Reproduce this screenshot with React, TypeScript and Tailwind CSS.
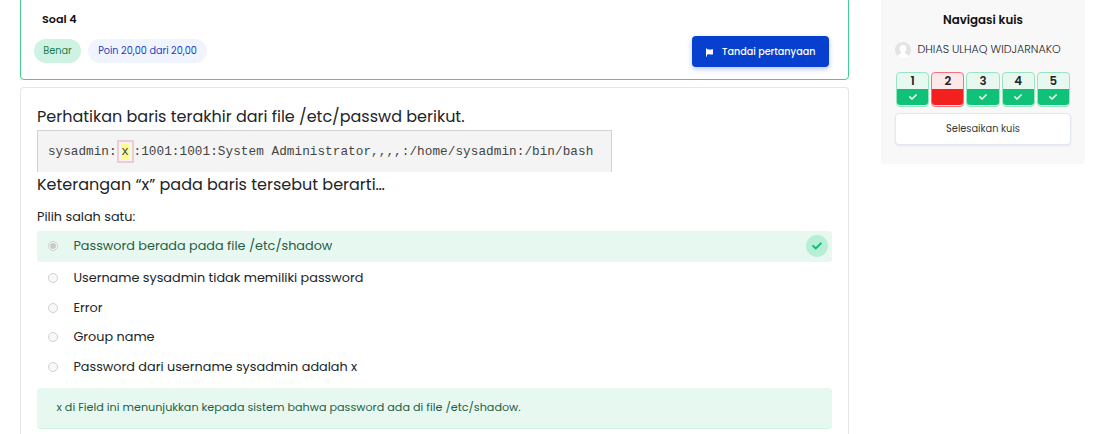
import { FaCheck } from "react-icons/fa";

const options = [
  { text: "Username sysadmin tidak memiliki password", row: "h-[30px]" },
  { text: "Error", row: "h-[29px]" },
  { text: "Group name", row: "h-[30px]" },
  { text: "Password dari username sysadmin adalah x", row: "h-[30px]" },
];

const questions = [
  { n: 1, ok: true },
  { n: 2, ok: false },
  { n: 3, ok: true },
  { n: 4, ok: true },
  { n: 5, ok: true },
];

function Radio({ checked = false }: { checked?: boolean }) {
  return (
    <span className="flex size-[10px] shrink-0 items-center justify-center rounded-full border border-[#d0d0d0] bg-[#f8f8f8]">
      {checked && <span className="size-[6px] rounded-full bg-[#c8cbc9]" />}
    </span>
  );
}

function Flag() {
  return (
    <svg width="8" height="9" viewBox="0 0 8 9" fill="#fff">
      <path d="M0 0.4H1V1.4C2.5 0.8 3.8 1.9 5 1.6L7 1.2V6.3C5.6 7 4.2 6.2 3 6.3L1 6.6V8.4H0Z" />
    </svg>
  );
}

function Avatar() {
  return (
    <svg width="16" height="16" viewBox="0 0 16 16" className="shrink-0">
      <circle cx="8" cy="8" r="8" fill="#e4e4e4" />
      <path d="M8 2.9C5.9 2.9 4.6 4.3 4.6 6.4C4.6 8 5.5 9.6 6.4 10.4V11C5.3 11.8 3.8 12 2.6 13.9A8 8 0 0 0 13.4 13.9C12.2 12 10.7 11.8 9.6 11V10.4C10.5 9.6 11.4 8 11.4 6.4C11.4 4.3 10.1 2.9 8 2.9Z" fill="#fff" />
    </svg>
  );
}

export default function App() {
  return (
    <div className="flex h-[434px] w-[1107px] items-start overflow-hidden bg-white font-['Poppins',Inter,sans-serif] whitespace-nowrap text-[#212529]">
      <main className="-mt-[3px] ml-[20px] w-[829px]">
        <section className="flex h-[83px] justify-between rounded-[4px] border border-[#3fd08f] pr-[19px] pl-[13px]">
          <div>
            <h2 className="mt-[12px] ml-[8px] text-[11.2px] leading-[18px] font-semibold text-[#111]">Soal 4</h2>
            <div className="mt-[11px] flex gap-[7px] text-[9.7px] leading-[24px]">
              <span className="h-[24px] w-[47px] rounded-full bg-[#cff3e3] text-center text-[#1c7c53]">Benar</span>
              <span className="h-[24px] w-[119px] rounded-full bg-[#f0f4ff] text-center text-[#1d40c4]">Poin 20,00 dari 20,00</span>
            </div>
          </div>
          <button className="mt-[38px] flex h-[31px] w-[137px] items-center rounded-[4px] bg-[#0740cf] pt-px pl-[14px] text-[9.6px] font-medium text-white shadow-[0_2px_5px_rgba(7,64,207,0.3)]">
            <Flag />
            <span className="ml-[8px] leading-[16px]">Tandai pertanyaan</span>
          </button>
        </section>

        <section className="mt-[7px] h-[360px] rounded-t-[4px] border border-b-0 border-[#e6e6e6] px-[16px]">
          <p className="mt-[16px] h-[26px] text-[16px] leading-[26px]">Perhatikan baris terakhir dari file /etc/passwd berikut.</p>
          <div className="flex h-[42px] w-[575px] items-center border border-b-0 border-[#d2d2d2] bg-[#f4f4f4] pl-[10px] font-['Courier_New','Liberation_Mono',monospace] text-[12.7px] text-[#444]">
            <span>sysadmin:</span>
            <span className="flex h-[23px] w-[17px] items-center justify-center border-2 border-[#eccdd2]">
              <span className="h-[16px] w-[8px] bg-[#ffff91] text-center leading-[15px]">x</span>
            </span>
            <span className="tracking-[0.05px]">:1001:1001:System Administrator,,,,:/home/sysadmin:/bin/bash</span>
          </div>
          <p className="h-[26px] text-[16px] leading-[25px]">Keterangan “x” pada baris tersebut berarti…</p>
          <p className="mt-[10px] h-[20px] text-[12.8px] leading-[18px]">Pilih salah satu:</p>

          <div className="mt-[3px] flex h-[31px] items-center rounded-[3px] bg-[#e7f8f0] pr-[4px] pb-px pl-[11px] text-[12.8px] text-[#265d47]">
            <Radio checked />
            <span className="ml-[15.4px]">Password berada pada file /etc/shadow</span>
            <span className="ml-auto flex size-[22px] items-center justify-center rounded-full bg-[#b7eed6]">
              <FaCheck className="size-[10px] text-[#15bb75]" />
            </span>
          </div>
          <div className="mt-[1px] text-[12.8px]">
            {options.map((o) => (
              <div key={o.text} className={`flex items-center pl-[11px] ${o.row}`}>
                <Radio />
                <span className="ml-[15.4px]">{o.text}</span>
              </div>
            ))}
          </div>
          <div className="mt-[6px] h-[41px] rounded-[4px] border-b border-[#d0f3e4] bg-[#e7f8f0] pl-[19.5px] text-[11.2px] leading-[38px] text-[#265d47]">
            x di Field ini menunjukkan kepada sistem bahwa password ada di file /etc/shadow.
          </div>
        </section>
      </main>

      <aside className="ml-[32px] h-[164px] w-[204px] rounded-b-[4px] bg-[#f8f8f8] px-[14px]">
        <h3 className="mt-[10px] h-[20px] text-center text-[11.8px] leading-[20px] font-semibold text-[#111]">Navigasi kuis</h3>
        <div className="mt-[12px] flex h-[16px] items-center gap-[6.5px] text-[11.1px] leading-[16px] font-light text-[#212529]">
          <Avatar />
          <span className="relative -top-px">DHIAS ULHAQ WIDJARNAKO</span>
        </div>
        <div className="mt-[14px] flex gap-[2px] pl-px">
          {questions.map((q) => (
            <div
              key={q.n}
              className={`h-[35px] w-[33.2px] rounded-[4px] border ${q.ok ? "border-[#99e4c3] bg-[#e7f8f0]" : "border-[#f5727c] bg-[#fde7e9]"}`}
            >
              <div className="h-[16px] text-center text-[11.8px] leading-[17px] font-semibold text-[#212529]">{q.n}</div>
              <div className={`flex h-[16px] items-center justify-center rounded-b-[3px] ${q.ok ? "bg-[#10c278]" : "bg-[#f32020]"}`}>
                {q.ok && <FaCheck className="size-[8px] text-white" />}
              </div>
            </div>
          ))}
        </div>
        <button className="mt-[6px] flex h-[32px] w-[176px] items-center justify-center rounded-[4px] border border-[#e3e7f2] bg-white text-[9.8px] text-[#343a40] shadow-[0_1px_2px_rgba(0,0,40,0.08)]">
          Selesaikan kuis
        </button>
      </aside>
    </div>
  );
}
